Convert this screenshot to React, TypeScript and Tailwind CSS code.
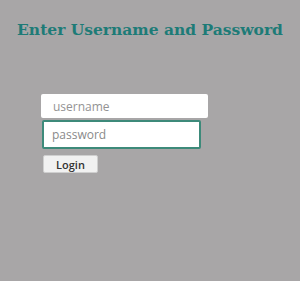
import React from "react";

export default function App() {
  return (
    <div className="w-[300px] h-[281px] bg-[#a8a6a7] overflow-hidden">
      <h1 className="pt-[20px] text-center text-[15.5px] leading-[20px] font-bold text-[#1d7b77] [font-family:'DejaVu_Serif',serif]">
        Enter Username and Password
      </h1>
      <div className="ml-[41px] mt-[54px] flex flex-col items-start [font-family:'Open_Sans',sans-serif]">
        <input
          placeholder="username"
          className="w-[167px] h-[24px] bg-white rounded-[2px] pl-[12px] text-[12px] placeholder:text-[#939393] outline-none border-0"
        />
        <input
          placeholder="password"
          className="mt-[2px] ml-[1px] w-[159px] h-[29px] bg-white rounded-[2px] pl-[8px] text-[12px] placeholder:text-[#8a8a8a] outline-none border-2 border-[#3d8a7a]"
        />
        <button className="mt-[6px] ml-[2px] w-[55px] h-[18px] bg-[#f1f1f1] rounded-[2px] border border-[#cfcfcf] text-[11px] font-semibold text-[#333] leading-none">
          Login
        </button>
      </div>
    </div>
  );
}
